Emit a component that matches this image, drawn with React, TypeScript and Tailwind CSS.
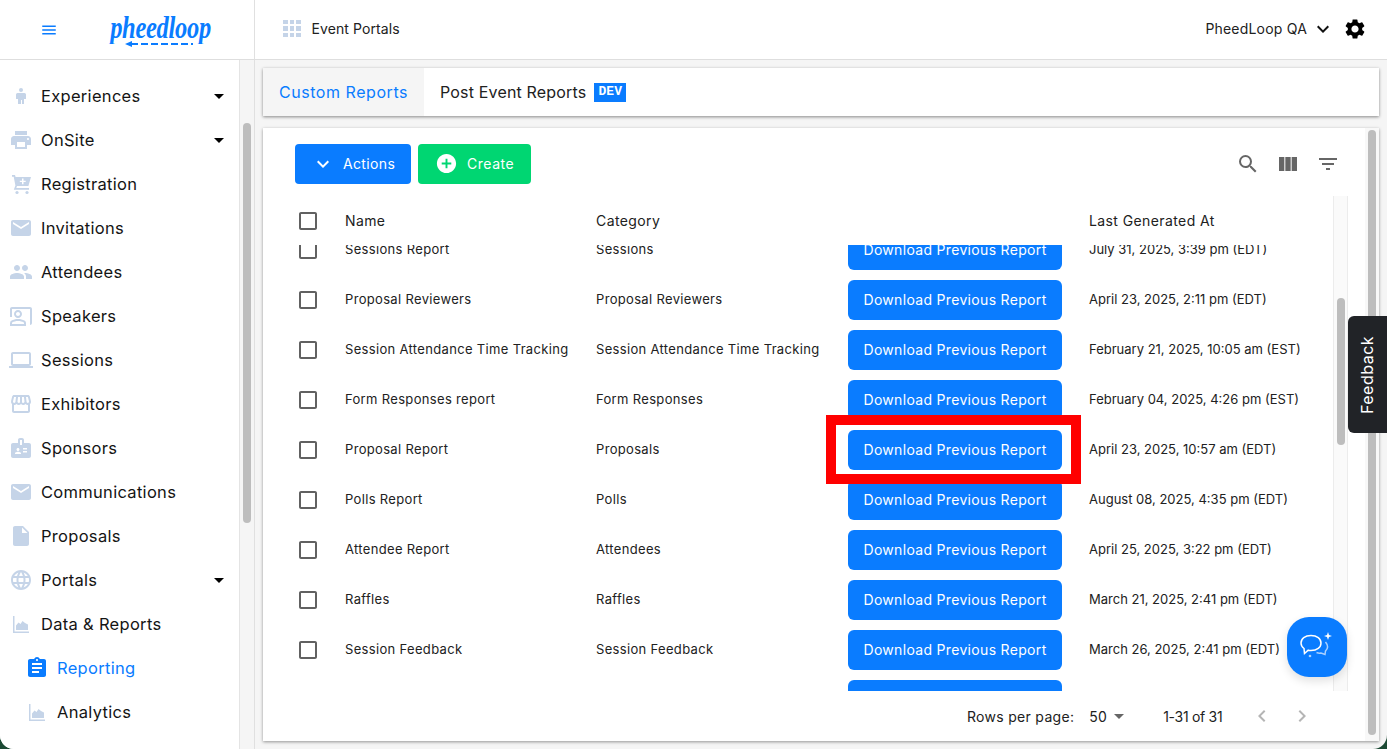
import type { IconType } from 'react-icons'
import {
  MdAddCircle,
  MdArrowDropDown,
  MdAssignment,
  MdBadge,
  MdCheckBoxOutlineBlank,
  MdChevronLeft,
  MdChevronRight,
  MdEmail,
  MdFilterList,
  MdInsertDriveFile,
  MdKeyboardArrowDown,
  MdLanguage,
  MdMenu,
  MdOutlineCoPresent,
  MdOutlineLaptop,
  MdOutlineStorefront,
  MdPeople,
  MdPrint,
  MdSearch,
  MdSettings,
  MdViewColumn,
} from 'react-icons/md'

type NavIcon = IconType | ((props: { className?: string }) => React.ReactElement)
type NavItem = { label: string; icon: NavIcon; caret?: boolean; sub?: boolean; active?: boolean }

function PersonIcon({ className }: { className?: string }) {
  return (
    <svg viewBox="0 0 24 24" width="1em" height="1em" fill="currentColor" className={className}>
      <circle cx="12" cy="6" r="2" />
      <path d="M8.500 9h7a1.500 1.500 0 0 1 1.500 1.500V15h-2v5h-2v-4h-1v4H9v-5H7v-4.500A1.500 1.500 0 0 1 8.500 9Z" />
    </svg>
  )
}

// cart with a plus knocked out of it, the package one is outline only
function CartIcon({ className }: { className?: string }) {
  return (
    <svg viewBox="0 0 24 24" width="1em" height="1em" fill="currentColor" className={className}>
      <path d="M3 3h3l.6 2H22l-2.600 9H8l-.7 2H20v1.800H4.800L6.400 13.500 4.700 4.800H3V3Z" />
      <circle cx="8" cy="20.500" r="1.600" />
      <circle cx="18" cy="20.500" r="1.600" />
      <path d="M13 6.500h1.500v2.200h2.200v1.400h-2.200v2.200H13v-2.200h-2.200V8.700H13V6.500Z" fill="white" />
    </svg>
  )
}

function ChartIcon({ className }: { className?: string }) {
  return (
    <svg viewBox="0 0 24 24" width="1em" height="1em" fill="currentColor" className={className}>
      <path d="M4 4h1.500v15.500H20V21H4V4Z" />
      <path d="M7 18v-4.500l2.500-3 2 1.500 2-3 2.500 2 3 1.500V18H7Z" />
    </svg>
  )
}

const nav: NavItem[] = [
  { label: 'Experiences', icon: PersonIcon, caret: true },
  { label: 'OnSite', icon: MdPrint, caret: true },
  { label: 'Registration', icon: CartIcon },
  { label: 'Invitations', icon: MdEmail },
  { label: 'Attendees', icon: MdPeople },
  { label: 'Speakers', icon: MdOutlineCoPresent },
  { label: 'Sessions', icon: MdOutlineLaptop },
  { label: 'Exhibitors', icon: MdOutlineStorefront },
  { label: 'Sponsors', icon: MdBadge },
  { label: 'Communications', icon: MdEmail },
  { label: 'Proposals', icon: MdInsertDriveFile },
  { label: 'Portals', icon: MdLanguage, caret: true },
  { label: 'Data & Reports', icon: ChartIcon },
  { label: 'Reporting', icon: MdAssignment, sub: true, active: true },
  { label: 'Analytics', icon: ChartIcon, sub: true },
]

const rows = [
  ['Sessions Report', 'Sessions', 'July 31, 2025, 3:39 pm (EDT)'],
  ['Proposal Reviewers', 'Proposal Reviewers', 'April 23, 2025, 2:11 pm (EDT)'],
  ['Session Attendance Time Tracking', 'Session Attendance Time Tracking', 'February 21, 2025, 10:05 am (EST)'],
  ['Form Responses report', 'Form Responses', 'February 04, 2025, 4:26 pm (EST)'],
  ['Proposal Report', 'Proposals', 'April 23, 2025, 10:57 am (EDT)'],
  ['Polls Report', 'Polls', 'August 08, 2025, 4:35 pm (EDT)'],
  ['Attendee Report', 'Attendees', 'April 25, 2025, 3:22 pm (EDT)'],
  ['Raffles', 'Raffles', 'March 21, 2025, 2:41 pm (EDT)'],
  ['Session Feedback', 'Session Feedback', 'March 26, 2025, 2:41 pm (EDT)'],
  ['', '', ''],
]

function Sidebar() {
  return (
    <div className="flex w-[255px] shrink-0">
      <nav className="w-[240px] overflow-hidden border-r border-[#e4e4e4] bg-white pt-[14px]">
        {nav.map((item) => (
          <div key={item.label} className={`relative flex h-[44px] items-center ${item.sub ? 'pl-[57px]' : 'pl-[41px]'}`}>
            <item.icon
              className={`absolute top-[10px] text-[24px] ${item.sub ? 'left-[25px]' : 'left-[9px]'} ${
                item.active ? 'text-[#0a7cff]' : 'text-[#c5d4e8]'
              }`}
            />
            <span className={`text-[16.5px] tracking-[0.3px] ${item.active ? 'text-[#0a7cff]' : 'text-[#141414]'}`}>
              {item.label}
            </span>
            {item.caret && <MdArrowDropDown className="absolute left-[207px] top-[10px] text-[24px] text-black" />}
          </div>
        ))}
      </nav>
      <div className="w-[15px] border-r border-[#e0e0e0] bg-[#f5f5f5] pl-[3px] pt-[63px]">
        <div className="h-[400px] w-[8px] rounded bg-[#bdbdbd]" />
      </div>
    </div>
  )
}

function Header() {
  return (
    <header className="flex h-[60px] shrink-0 border-b border-[#dedede] bg-white">
      <div className="flex w-[255px] shrink-0 items-center border-r border-[#e0e0e0] pl-[40px]">
        <MdMenu className="text-[18px] text-[#0a7cff]" />
        <div className="relative ml-[52px] h-[40px] w-[101px]">
          <span className="block origin-top scale-y-125 text-center font-['Liberation_Serif',serif] text-[24.5px] font-bold italic leading-[28px] tracking-[-0.3px] text-[#0a7cff]">
            pheedloop
          </span>
          <svg viewBox="0 0 70 6" className="absolute left-[15px] top-[31px] h-[6px] w-[70px]" fill="none">
            <path d="M6 3 L68 3" stroke="#0a7cff" strokeWidth="2" strokeDasharray="7 3" />
            <path d="M0 3 L7 0 V6 Z" fill="#0a7cff" />
          </svg>
        </div>
      </div>
      <div className="flex flex-1 items-center pb-[2px] pl-[28px] pr-[20px]">
        <div className="grid grid-cols-3 gap-[2px]">
          {Array.from({ length: 9 }).map((_, i) => (
            <span key={i} className="h-[4.5px] w-[4.5px] bg-[#c5d4e8]" />
          ))}
        </div>
        <span className="ml-[11px] text-[14px] tracking-[0.1px] text-[#212121]">Event Portals</span>
        <span className="ml-auto text-[14px] tracking-[0.2px] text-[#212121]">PheedLoop QA</span>
        <MdKeyboardArrowDown className="ml-[4px] text-[24px] text-[#111]" />
        <MdSettings className="ml-[8px] text-[24px] text-black" />
      </div>
    </header>
  )
}

function Tabs() {
  return (
    <div className="flex h-[48px] shrink-0 bg-white shadow-[0_1px_3px_rgba(0,0,0,0.45)]">
      <div className="flex w-[161px] items-center justify-center bg-[#f5f5f5] text-[16px] tracking-[0.55px] text-[#0a7cff]">
        Custom Reports
      </div>
      <div className="flex items-center pl-[16px] text-[16px] tracking-[0.17px] text-[#212121]">
        Post Event Reports
        <span className="ml-[8px] flex h-[19px] w-[32px] items-center justify-center bg-[#0a7cff] font-['Liberation_Mono',monospace] text-[13px] font-bold text-white">
          DEV
        </span>
      </div>
    </div>
  )
}

function ReportRow({ row }: { row: string[] }) {
  return (
    <div className="grid h-[50px] grid-cols-[49px_251px_252px_241px_1fr] items-center text-[13px] tracking-[0.33px] text-[#212121]">
      <MdCheckBoxOutlineBlank className="text-[24px] text-[#616161]" />
      <span>{row[0]}</span>
      <span>{row[1]}</span>
      <button className="flex h-[40px] w-[214px] items-center justify-center rounded-[6px] bg-[#0a7cff] pb-[2px] text-[14px] tracking-[0.32px] text-white">
        Download Previous Report
      </button>
      <span className="whitespace-nowrap tracking-normal">{row[2]}</span>
    </div>
  )
}

function ReportTable() {
  return (
    <div className="flex h-[495px] shrink-0 pr-[17px]">
      <div className="min-w-0 flex-1 pl-[33px]">
        <div className="grid h-[49px] grid-cols-[49px_251px_252px_241px_1fr] items-center text-[14px] tracking-[0.4px] text-[#212121]">
          <MdCheckBoxOutlineBlank className="text-[24px] text-[#616161]" />
          <span>Name</span>
          <span>Category</span>
          <span />
          <span>Last Generated At</span>
        </div>
        <div className="h-[446px] overflow-hidden">
          <div className="-mt-[20px]">
            {rows.map((row, i) => (
              <ReportRow key={i} row={row} />
            ))}
          </div>
        </div>
      </div>
      <div className="w-[15px] border-x border-[#ececec] bg-[#fafafa] pl-[3px] pt-[102px]">
        <div className="h-[147px] w-[8px] rounded bg-[#bdbdbd]" />
      </div>
    </div>
  )
}

export default function App() {
  return (
    <div className="h-[749px] w-[1387px] overflow-hidden bg-[#1c4a34] font-['Inter',sans-serif]">
      <div className="relative flex h-full flex-col overflow-hidden rounded-b-[14px] bg-[#f5f5f5]">
        <Header />
        <div className="flex min-h-0 flex-1">
          <Sidebar />
          <main className="flex min-w-0 flex-1 flex-col px-[8px] pb-[8px] pt-[8px]">
            <Tabs />
            <section className="mt-[12px] flex min-h-0 flex-1 bg-white shadow-[0_1px_3px_rgba(0,0,0,0.4)]">
              <div className="flex min-w-0 flex-1 flex-col">
                <div className="flex h-[68px] shrink-0 items-start pl-[32px] pr-[25px] pt-[16px]">
                  <button className="flex h-[40px] w-[116px] items-center rounded-[4px] bg-[#0a7cff] pb-[1px] pl-[16px] text-[14px] tracking-[0.35px] text-white">
                    <MdKeyboardArrowDown className="mr-[8px] text-[24px]" />
                    Actions
                  </button>
                  <button className="ml-[7px] flex h-[40px] w-[113px] items-center rounded-[4px] bg-[#00d672] pb-[1px] pl-[17px] text-[14px] tracking-[0.55px] text-white">
                    <MdAddCircle className="mr-[9px] text-[23px]" />
                    Create
                  </button>
                  <div className="ml-auto flex items-center gap-[16px] pt-[8px] text-[#666]">
                    <MdSearch className="text-[24px]" />
                    <MdViewColumn className="text-[24px]" />
                    <MdFilterList className="text-[24px]" />
                  </div>
                </div>
                <ReportTable />
                <div className="flex flex-1 items-center pl-[704px] text-[14px] tracking-[0.3px] text-[#212121]">
                  <span>Rows per page:</span>
                  <span className="ml-[15px]">50</span>
                  <MdArrowDropDown className="text-[24px] text-[#666]" />
                  <span className="ml-[32px] tracking-[-0.3px]">1-31 of 31</span>
                  <MdChevronLeft className="ml-[28px] text-[24px] text-[#b5b5b5]" />
                  <MdChevronRight className="ml-[16px] text-[24px] text-[#b5b5b5]" />
                </div>
              </div>
              <div className="w-[14px] shrink-0 bg-[#f8f8f8] pl-[3px] pt-[2px]">
                <div className="h-[605px] w-[8px] rounded bg-[#bdbdbd]" />
              </div>
            </section>
          </main>
        </div>

        {/* things floating over the page */}
        <div className="absolute left-[826px] top-[415px] h-[69px] w-[255px] border-[10px] border-[#ff0000]" />
        <div className="absolute left-[1348px] top-[316px] flex h-[117px] w-[39px] items-center justify-center rounded-l-[6px] bg-[#212327]">
          <span className="-rotate-90 text-[16px] tracking-[0.5px] text-white">Feedback</span>
        </div>
        <div className="absolute left-[1287px] top-[617px] flex h-[60px] w-[60px] items-center justify-center rounded-[22px] bg-[#0a7cff] shadow-[0_4px_10px_rgba(0,0,0,0.12)]">
          <svg viewBox="0 0 36 32" className="h-[32px] w-[36px]" fill="none" stroke="white" strokeWidth="1.5">
            <path d="M12 4.500c6 0 10 3 10 7.500s-4 7.500-10 7.500c-1 0-2 0-2.800-.3L5.500 22.500l-.5-5C3 16 2 14 2 12c0-4.500 4-7.500 10-7.500Z" />
            <path d="M26.500 11c2.500 3 2.500 6.500 0 9l-.5 3.500-4-1.500c-1.500.3-3 .1-4.500-.5" stroke="#a9d0ff" />
            <path d="M29 1l1 3 3 1-3 1-1 3-1-3-3-1 3-1Z" fill="white" stroke="none" />
            <circle cx="11" cy="25" r="1.300" fill="#a9d0ff" stroke="none" />
          </svg>
        </div>
      </div>
    </div>
  )
}
